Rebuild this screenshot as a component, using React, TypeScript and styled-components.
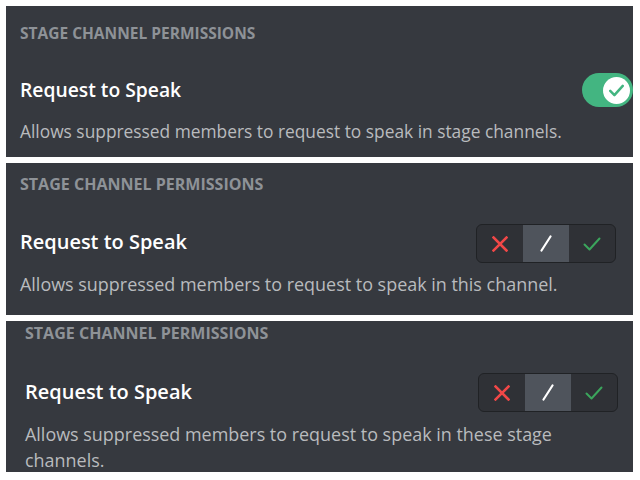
import React from "react";
import styled, { createGlobalStyle } from "styled-components";

const Global = createGlobalStyle`
  html, body { margin: 0; padding: 0; background: #ffffff; }
  body { font-family: "Open Sans", "Noto Sans", sans-serif; }
  * { box-sizing: border-box; }
`;

const Page = styled.div`
  display: flex;
  flex-direction: column;
  gap: 6px;
  padding: 6px 7px 0 6px;
  width: 640px;
`;

type PanelProps = {
  $h: number;
  $pt: number;
  $pl: number;
  $pr: number;
  $scale: number;
};

const Panel = styled.section<PanelProps>`
  height: ${(p) => p.$h}px;
  padding: ${(p) => p.$pt}px ${(p) => p.$pr}px 0 ${(p) => p.$pl}px;
  background: #36393f;
  overflow: hidden;
  display: flex;
  flex-direction: column;
  --s: ${(p) => p.$scale};
`;

const Heading = styled.h2`
  margin: 0;
  font-size: calc(15.5px * var(--s));
  line-height: 20px;
  font-weight: 700;
  color: #8e9297;
  text-transform: uppercase;
  letter-spacing: 0;
`;

const Row = styled.div<{ $mt: number }>`
  margin-top: ${(p) => p.$mt}px;
  display: flex;
  align-items: center;
  justify-content: space-between;
`;

const Title = styled.div<{ $lift: number }>`
  font-size: calc(19.3px * var(--s));
  line-height: 28px;
  font-weight: 600;
  color: #ffffff;
  margin-bottom: ${(p) => p.$lift}px;
`;

const Description = styled.p<{ $mt: number; $lh: number; $max?: number }>`
  margin: ${(p) => p.$mt}px 0 0 0;
  font-size: calc(17.35px * var(--s));
  line-height: ${(p) => p.$lh}px;
  color: #b9bbbe;
  max-width: ${(p) => (p.$max ? `${p.$max}px` : "none")};
`;

const Switch = styled.div`
  width: 51px;
  height: 34px;
  border-radius: 17px;
  background: #43b581;
  display: flex;
  align-items: center;
  justify-content: flex-end;
  padding-right: 3px;
  flex-shrink: 0;
`;

const Knob = styled.div`
  width: 27px;
  height: 27px;
  border-radius: 50%;
  background: #ffffff;
  display: flex;
  align-items: center;
  justify-content: center;
`;

const Segmented = styled.div`
  width: 140px;
  height: 39px;
  border: 1px solid #202225;
  border-radius: 6px;
  background: #2f3136;
  display: flex;
  overflow: hidden;
  flex-shrink: 0;
`;

const Segment = styled.div<{ $active?: boolean }>`
  flex: 1;
  display: flex;
  align-items: center;
  justify-content: center;
  background: ${(p) => (p.$active ? "#4f545c" : "transparent")};
`;

const XIcon = () => (
  <svg width="16" height="16" viewBox="0 0 16 16">
    <path d="M1.5 1.5 L14.5 14.5 M14.5 1.5 L1.5 14.5" stroke="#f04747" strokeWidth="2.5" strokeLinecap="square" fill="none" />
  </svg>
);

const SlashIcon = () => (
  <svg width="14" height="17" viewBox="0 0 14 17">
    <path d="M2.5 15.5 L11.5 1.5" stroke="#ffffff" strokeWidth="2.2" strokeLinecap="round" fill="none" />
  </svg>
);

const CheckIcon = ({ color, size, width }: { color: string; size: number; width: number }) => (
  <svg width={size} height={size} viewBox="0 0 18 18">
    <path d="M1.5 9.5 L6.5 14.5 L16.5 3.5" stroke={color} strokeWidth={width} fill="none" strokeLinecap="round" strokeLinejoin="round" />
  </svg>
);

const TriState = () => (
  <Segmented>
    <Segment>
      <XIcon />
    </Segment>
    <Segment $active>
      <SlashIcon />
    </Segment>
    <Segment>
      <CheckIcon color="#3ba55c" size={18} width={2} />
    </Segment>
  </Segmented>
);

const Toggle = () => (
  <Switch>
    <Knob>
      <CheckIcon color="#43b581" size={15} width={3} />
    </Knob>
  </Switch>
);

export default function App() {
  return (
    <>
      <Global />
      <Page>
        <Panel $h={151} $pt={17} $pl={14} $pr={0} $scale={1}>
          <Heading>Stage Channel Permissions</Heading>
          <Row $mt={30}>
            <Title $lift={0}>Request to Speak</Title>
            <Toggle />
          </Row>
          <Description $mt={13} $lh={22}>
            Allows suppressed members to request to speak in stage channels.
          </Description>
        </Panel>
        <Panel $h={152} $pt={11} $pl={14} $pr={17} $scale={1.035}>
          <Heading>Stage Channel Permissions</Heading>
          <Row $mt={30}>
            <Title $lift={3}>Request to Speak</Title>
            <TriState />
          </Row>
          <Description $mt={10} $lh={22}>
            Allows suppressed members to request to speak in this channel.
          </Description>
        </Panel>
        <Panel $h={151} $pt={2} $pl={19} $pr={15} $scale={1.035}>
          <Heading>Stage Channel Permissions</Heading>
          <Row $mt={30}>
            <Title $lift={2}>Request to Speak</Title>
            <TriState />
          </Row>
          <Description $mt={9} $lh={26} $max={575}>
            Allows suppressed members to request to speak in these stage channels.
          </Description>
        </Panel>
      </Page>
    </>
  );
}
